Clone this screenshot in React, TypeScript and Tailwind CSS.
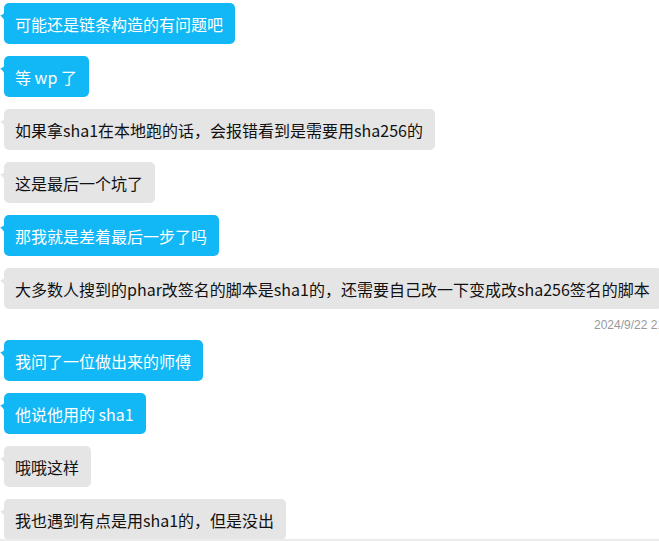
import React from "react";

type Msg = { text: string; blue: boolean };

const first: Msg[] = [
  { text: "可能还是链条构造的有问题吧", blue: true },
  { text: "等 wp 了", blue: true },
  { text: "如果拿sha1在本地跑的话，会报错看到是需要用sha256的", blue: false },
  { text: "这是最后一个坑了", blue: false },
  { text: "那我就是差着最后一步了吗", blue: true },
  { text: "大多数人搜到的phar改签名的脚本是sha1的，还需要自己改一下变成改sha256签名的脚本", blue: false },
];

const second: Msg[] = [
  { text: "我问了一位做出来的师傅", blue: true },
  { text: "他说他用的 sha1", blue: true },
  { text: "哦哦这样", blue: false },
  { text: "我也遇到有点是用sha1的，但是没出", blue: false },
];

function Bubble({ m, first }: { m: Msg; first?: boolean }) {
  const color = m.blue ? "#12B7F5" : "#E5E5E5";
  return (
    <div className={`flex pl-[4px] ${first ? "" : "mt-[12px]"}`}>
      <div
        className={`relative h-[41px] flex items-center pl-[11px] pr-[12px] rounded-[5px] whitespace-nowrap text-[16px] ${
          m.blue ? "bg-[#12B7F5] text-white" : "bg-[#E5E5E5] text-[#111111]"
        }`}
      >
        <svg
          className="absolute left-[-4px] top-[9px]"
          width="5"
          height="10"
          viewBox="0 0 5 10"
        >
          <path d="M5 0 L5 10 C4 7 2.5 5 0 3.5 C1.5 3.5 3.5 2 5 0 Z" fill={color} />
        </svg>
        {m.text}
      </div>
    </div>
  );
}

export default function App() {
  return (
    <div
      className="w-[659px] h-[541px] overflow-hidden bg-white relative"
      style={{ fontFamily: '"Noto Sans CJK SC", "Noto Sans", sans-serif' }}
    >
      <div className="flex flex-col pt-[3px]">
        {first.map((m, i) => (
          <Bubble key={i} m={m} first={i === 0} />
        ))}
        <div
          className="h-[31px] flex items-center pl-[594px] whitespace-nowrap text-[12px] text-[#999999]"
          style={{ fontFamily: '"Liberation Sans", Arial, sans-serif' }}
        >
          2024/9/22 21:30
        </div>
        {second.map((m, i) => (
          <Bubble key={i} m={m} first={i === 0} />
        ))}
      </div>
      <div className="absolute left-0 right-0 bottom-0 h-[2px] bg-[#EBEBEB]" />
    </div>
  );
}
